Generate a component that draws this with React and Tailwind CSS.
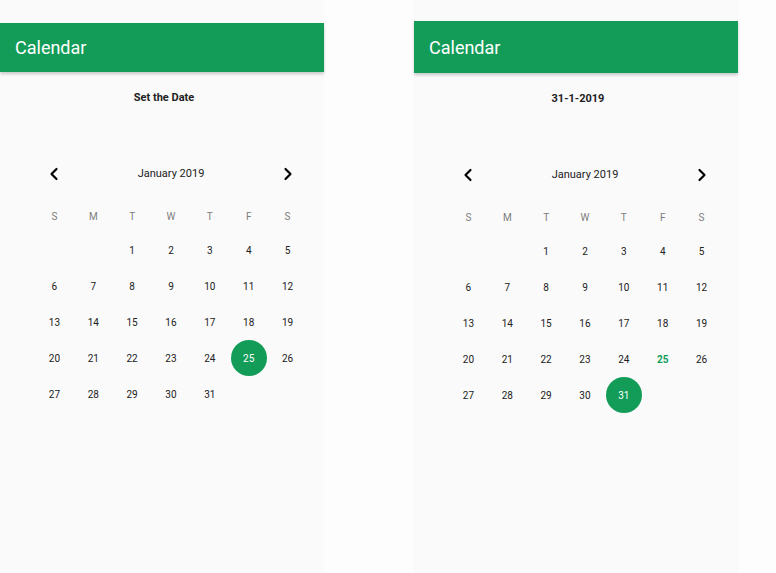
import React from "react";
import { ChevronLeft, ChevronRight } from "lucide-react";

const WEEK = ["S", "M", "T", "W", "T", "F", "S"];

function Panel({ title, headerClass, selected, today }) {
  const cells = [];
  for (let i = 0; i < 2; i++) cells.push(null);
  for (let d = 1; d <= 31; d++) cells.push(d);
  return (
    <div className="w-[324px] h-[573px] flex flex-col bg-[#fafafa]">
      <div className={"bg-[#129c58] flex items-center pl-[15px] shadow-[0_2px_3px_rgba(0,0,0,0.2)] relative z-10 " + headerClass}>
        <span className="text-white text-[18px]">Calendar</span>
      </div>
      <div className="h-[52px] flex items-center justify-center pl-[4px]">
        <span className="text-[11px] font-bold text-[#212121]">{title}</span>
      </div>
      <div className="pl-[35px] pr-[17px] mt-[32px]">
        <div className="grid grid-cols-7 h-[36px] items-center">
          <div className="flex justify-center">
            <ChevronLeft size={20} strokeWidth={2.6} className="text-black" />
          </div>
          <div className="col-span-5 flex justify-center text-[11px] text-[#212121]">January 2019</div>
          <div className="flex justify-center">
            <ChevronRight size={20} strokeWidth={2.6} className="text-black" />
          </div>
        </div>
        <div className="grid grid-cols-7 h-[24px] mt-[12px] items-center">
          {WEEK.map((w, i) => (
            <div key={i} className="flex justify-center text-[10px] text-[#7d7d7d]">{w}</div>
          ))}
        </div>
        <div className="grid grid-cols-7 mt-[4px]">
          {cells.map((d, i) => (
            <div key={i} className="h-[36px] flex items-center justify-center">
              {d === null ? null : d === selected ? (
                <div className="w-9 h-9 rounded-full bg-[#129c58] text-white text-[10px] flex items-center justify-center">{d}</div>
              ) : d === today ? (
                <span className="text-[10px] font-bold text-[#129c58]">{d}</span>
              ) : (
                <span className="text-[10px] text-[#212121]">{d}</span>
              )}
            </div>
          ))}
        </div>
      </div>
    </div>
  );
}

export default function App() {
  return (
    <div className="w-[776px] h-[573px] bg-[#fdfdfd] flex overflow-hidden" style={{ fontFamily: "Roboto, 'Noto Sans', sans-serif" }}>
      <Panel title="Set the Date" headerClass="mt-[23px] h-[49px]" selected={25} />
      <div className="w-[90px]" />
      <Panel title="31-1-2019" headerClass="mt-[21px] h-[52px]" selected={31} today={25} />
    </div>
  );
}
